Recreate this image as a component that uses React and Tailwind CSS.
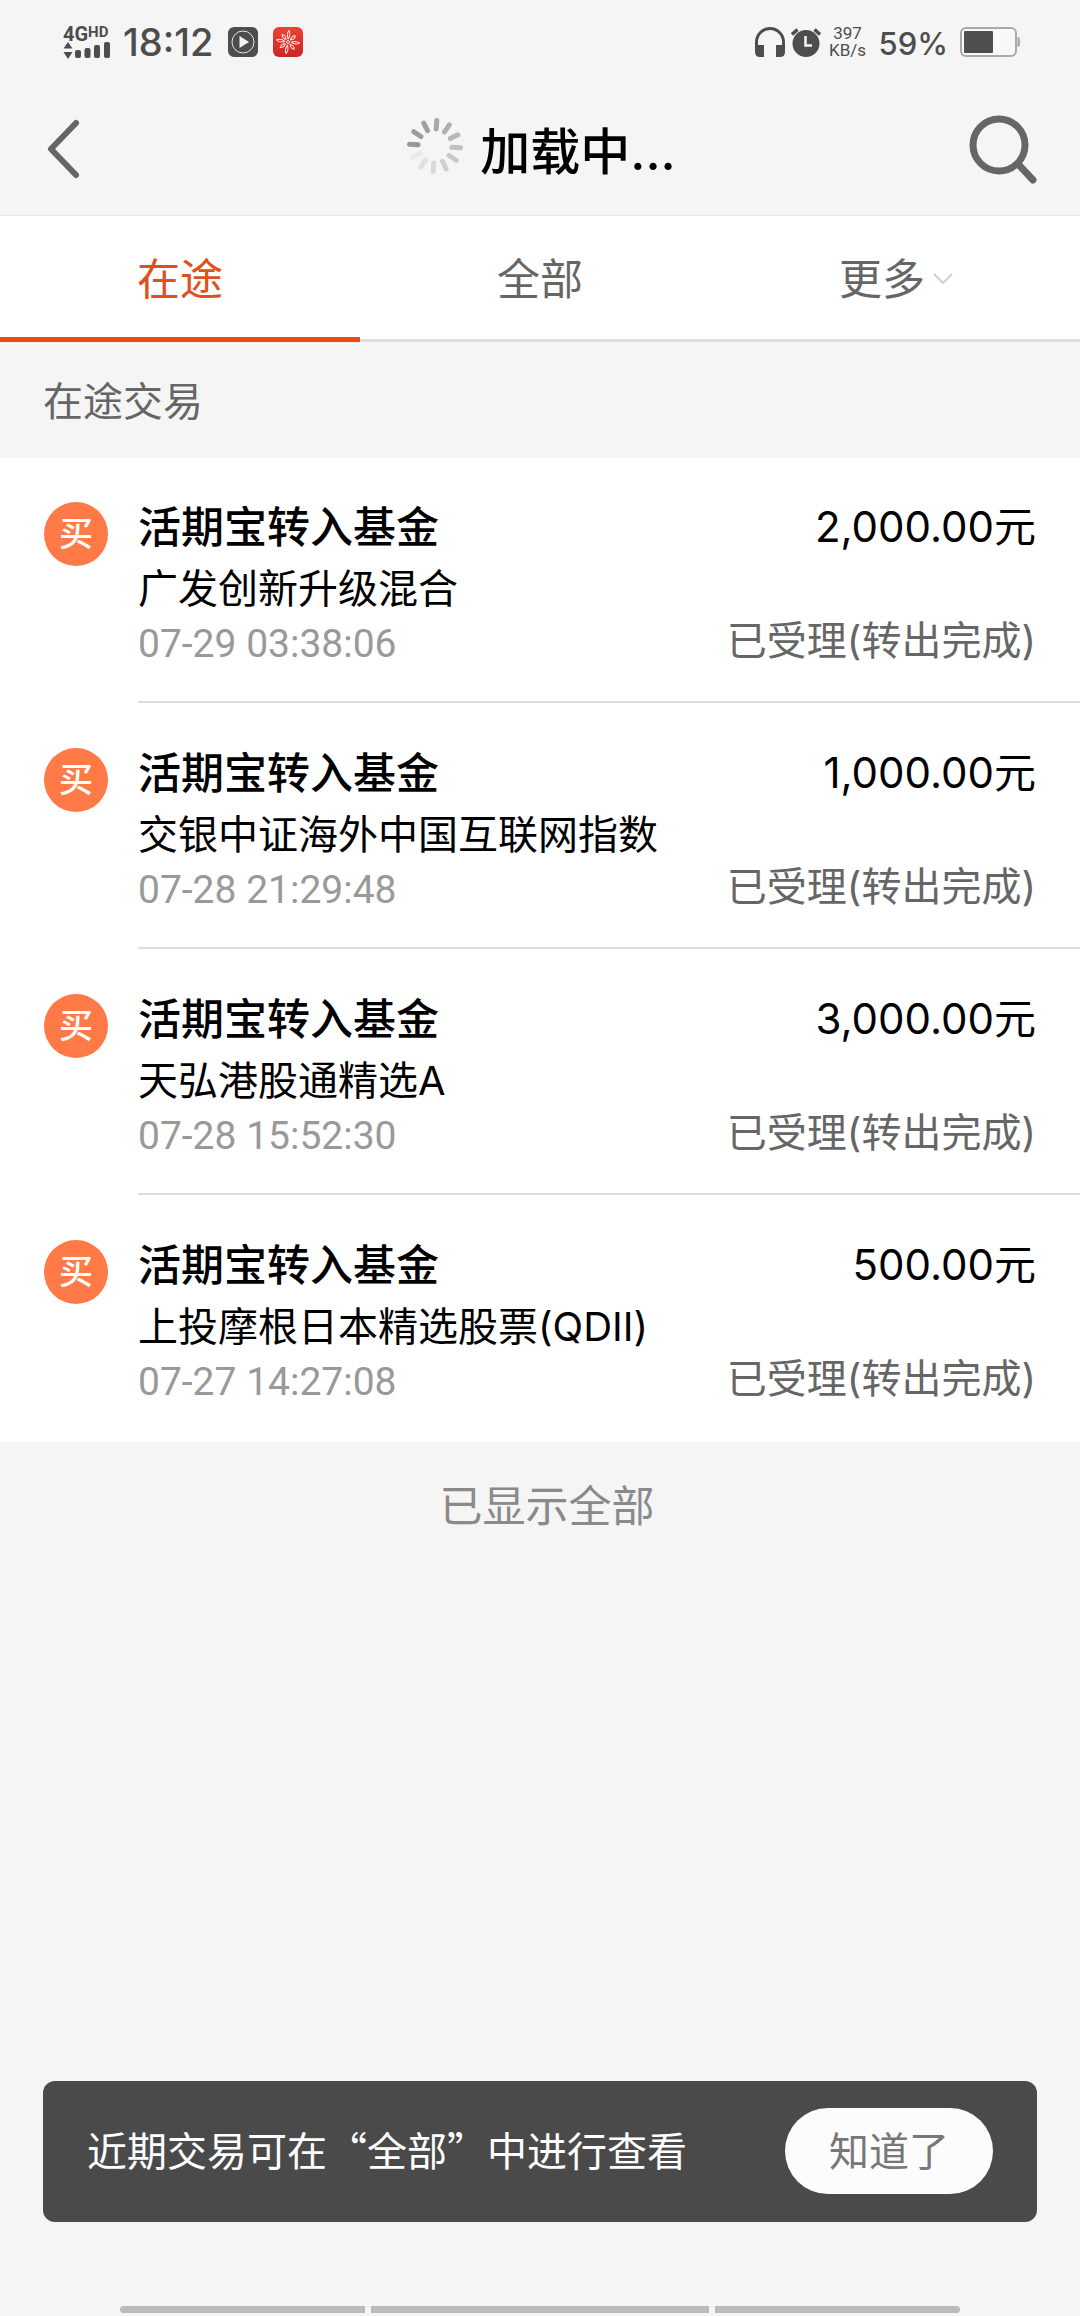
// TradeListPage - pending fund trades: status bar, header, tabs, trade rows and bottom notice.

import { useState } from 'react';
import clsx from 'clsx';

const TABS = [
  { id: 'pending', label: '在途' },
  { id: 'all', label: '全部' },
  { id: 'more', label: '更多', hasMenu: true },
];

const TRADES = [
  { id: 1, title: '活期宝转入基金', fund: '广发创新升级混合', time: '07-29 03:38:06', amount: '2,000.00', status: '已受理(转出完成)' },
  { id: 2, title: '活期宝转入基金', fund: '交银中证海外中国互联网指数', time: '07-28 21:29:48', amount: '1,000.00', status: '已受理(转出完成)' },
  { id: 3, title: '活期宝转入基金', fund: '天弘港股通精选A', time: '07-28 15:52:30', amount: '3,000.00', status: '已受理(转出完成)' },
  { id: 4, title: '活期宝转入基金', fund: '上投摩根日本精选股票(QDII)', time: '07-27 14:27:08', amount: '500.00', status: '已受理(转出完成)' },
];

const SPOKE_COLORS = [
  '#a8a8a8', '#b0b0b0', '#b8b8b8', '#c0c0c0', '#c8c8c8', '#d0d0d0',
  '#d8d8d8', '#e0e0e0', '#e9e9e9', '#989898', '#9c9c9c', '#a0a0a0',
];

const SignalIcon = () => (
  <svg width="48" height="17" viewBox="0 0 48 17" fill="#4d4d4d">
    <path d="M5 0 L9.5 6.5 H0.5 Z M5 17 L9.5 10 H0.5 Z" />
    <rect x="12" y="8" width="6" height="8" rx="2" />
    <rect x="21.5" y="6" width="6" height="10" rx="2" />
    <rect x="31" y="3" width="6" height="13" rx="2" />
    <rect x="41" y="0" width="6" height="16" rx="2" />
  </svg>
);

const PlayIcon = () => (
  <svg width="30" height="30" viewBox="0 0 30 30">
    <rect width="30" height="30" rx="6" fill="#4d4d4d" />
    <circle cx="15" cy="15" r="11" fill="none" stroke="#e4e4e4" strokeWidth="1" />
    <path d="M11.5 9 L21 15 L11.5 21 Z" fill="#f4f4f4" />
  </svg>
);

const FlowerIcon = () => (
  <svg width="30" height="30" viewBox="0 0 30 30">
    <defs>
      <linearGradient id="flower-bg" x1="0" y1="0" x2="0" y2="1">
        <stop offset="0" stopColor="#ee4038" />
        <stop offset="1" stopColor="#cb2622" />
      </linearGradient>
    </defs>
    <rect width="30" height="30" rx="6" fill="url(#flower-bg)" />
    <g fill="none" stroke="#ffe6e2" strokeWidth="1">
      {[5, 50, 95, 140, 190, 235, 280, 322].map((angle, i) => (
        <path
          key={angle}
          d={i % 2 ? 'M15 12 Q12.5 8 15 5.5 Q17.5 8 15 12' : 'M15 12 Q12.5 7 15 3.5 Q17.5 7 15 12'}
          transform={`rotate(${angle} 15 15)`}
        />
      ))}
      <circle cx="15" cy="15" r="1.5" />
    </g>
  </svg>
);

const HeadphonesIcon = () => (
  <svg width="30" height="30" viewBox="0 0 30 30">
    <path d="M1.5 22 V15 A13.5 13.5 0 0 1 28.5 15 V22" fill="none" stroke="#4d4d4d" strokeWidth="3" />
    <path d="M0 18 H9 V30 H5 Q0 30 0 25 Z M30 18 H21 V30 H25 Q30 30 30 25 Z" fill="#4d4d4d" />
  </svg>
);

const AlarmIcon = () => (
  <svg width="30" height="30" viewBox="0 0 30 30">
    <circle cx="15" cy="16.5" r="13.5" fill="#4d4d4d" />
    <path d="M1 7.5 L6.5 2.5 M29 7.5 L23.5 2.5" stroke="#4d4d4d" strokeWidth="3.5" />
    <path d="M14.5 9 V18.5 H21" fill="none" stroke="#f4f4f4" strokeWidth="2.5" />
  </svg>
);

const BatteryIcon = () => (
  <svg width="60" height="30" viewBox="0 0 60 30">
    <rect x="1" y="1" width="55" height="28" rx="5" fill="#f8f8f8" stroke="#a9a9a9" strokeWidth="2" />
    <rect x="4" y="4" width="29" height="22" rx="1" fill="#4f4f4f" />
    <path d="M57.5 10 Q60 10 60 12 V18 Q60 20 57.5 20 Z" fill="#a9a9a9" />
  </svg>
);

const Spinner = () => (
  <svg width="58" height="58" viewBox="0 0 58 58" strokeWidth="5" strokeLinecap="round">
    {SPOKE_COLORS.map((color, i) => (
      <path key={color} d="M29 3.5 V12" stroke={color} transform={`rotate(${i * 30 + 4} 29 29)`} />
    ))}
  </svg>
);

const StatusBar = () => (
  <div className="flex h-21 items-center justify-between pr-15 pl-[63px] text-[#4d4d4d]">
    <div className="flex items-center">
      <div className="w-[60px]">
        <div className="flex items-start font-['Roboto',sans-serif] font-bold">
          <span className="text-[20px] leading-4">4G</span>
          <span className="text-[15px] leading-3">HD</span>
        </div>
        <SignalIcon />
      </div>
      <span className="w-[105px] text-[38px] leading-10 font-medium">18:12</span>
      <div className="flex gap-[15px]">
        <PlayIcon />
        <FlowerIcon />
      </div>
    </div>
    <div className="flex items-center">
      <HeadphonesIcon />
      <span className="ml-1.5"><AlarmIcon /></span>
      <div className="ml-2 w-[38px] text-center font-['Roboto',sans-serif] text-[17px] leading-[17px]">
        <div>397</div>
        <div>KB/s</div>
      </div>
      <span className="mx-3 pt-1 text-[31px] leading-10 font-medium">59%</span>
      <BatteryIcon />
    </div>
  </div>
);

const Header = () => (
  <header className="grid h-33 grid-cols-[1fr_auto_1fr] items-center border-b border-[#e6e6e6] px-[42px]">
    <button aria-label="返回" className="justify-self-start pl-1">
      <svg width="36" height="62" viewBox="0 0 36 62" fill="none" stroke="#666" strokeWidth="6" strokeLinecap="round" strokeLinejoin="round">
        <path d="M30 4 L5 30 L30 56" />
      </svg>
    </button>
    <div className="flex items-center gap-4 pl-0.5">
      <span className="pb-2"><Spinner /></span>
      <h1 className="pt-1 text-[50px] leading-16 font-medium text-black">加载中...</h1>
    </div>
    <button aria-label="搜索" className="justify-self-end">
      <svg width="70" height="72" viewBox="0 0 70 72" fill="none" stroke="#666" strokeWidth="7" strokeLinecap="round">
        <circle cx="31" cy="31" r="26" />
        <path d="M50 50 L65 66" />
      </svg>
    </button>
  </header>
);

const Tabs = ({ active, onChange }) => (
  <nav className="grid h-[126px] grid-cols-3 bg-white shadow-[inset_0_-3px_0_#dfdfdf]">
    {TABS.map((tab) => (
      <button
        key={tab.id}
        onClick={() => onChange(tab.id)}
        className={clsx(
          'flex items-center justify-center gap-2 border-b-5 pt-1 text-[43px] leading-16',
          active === tab.id ? 'border-[#ee4d10] text-[#e0501c]' : 'border-transparent text-[#666]',
          tab.hasMenu && 'pr-2',
        )}
      >
        {tab.label}
        {tab.hasMenu && (
          <svg width="20" height="12" viewBox="0 0 20 12" fill="none" stroke="#d0d0d0" strokeWidth="2">
            <path d="M1 1 L10 10 L19 1" />
          </svg>
        )}
      </button>
    ))}
  </nav>
);

const TradeRow = ({ trade }) => (
  <li className="group flex pl-11">
    <span className="mt-11 flex size-16 shrink-0 items-center justify-center rounded-full bg-[#ff7a47] text-[34px] leading-10 font-medium text-white">
      买
    </span>
    <div className="ml-[30px] flex h-[245px] grow justify-between border-b-2 border-[#dedede] pt-[37px] pr-11 group-last:h-[246px] group-last:border-transparent">
      <div>
        <h2 className="text-[43px] leading-16 font-medium text-black">{trade.title}</h2>
        <p className="text-[40px] leading-15 text-black">{trade.fund}</p>
        <time className="block font-['Roboto',sans-serif] text-[39px] leading-[50px] text-[#999]">{trade.time}</time>
      </div>
      <div className="flex flex-col gap-13 text-right">
        <p className="text-[42px] leading-16 text-black">{trade.amount}元</p>
        <p className="text-[40px] leading-15 text-[#666]">{trade.status}</p>
      </div>
    </div>
  </li>
);

const Notice = ({ onClose }) => (
  <div className="mx-[43px] mt-auto flex h-[141px] items-center justify-between rounded-xl bg-[#4a4a4a] px-11 pb-0.5 font-['Noto_Sans_CJK_SC',sans-serif] text-[40px] leading-15">
    <p className="pb-1 text-white">近期交易可在“全部”中进行查看</p>
    <button onClick={onClose} className="h-[86px] rounded-full bg-[#fcfcfc] px-11 pb-1 text-[#777]">知道了</button>
  </div>
);

const App = () => {
  const [activeTab, setActiveTab] = useState('pending');
  const [showNotice, setShowNotice] = useState(true);

  return (
    <div className="flex min-h-screen flex-col bg-[#f5f5f5] font-['Inter','Noto_Sans_CJK_SC',sans-serif]">
      <StatusBar />
      <Header />
      <Tabs active={activeTab} onChange={setActiveTab} />

      <main>
        <h2 className="flex h-29 items-center pt-1 pl-[43px] text-[40px] leading-15 text-[#666]">在途交易</h2>
        <ul className="flex flex-col gap-px bg-white">
          {TRADES.map((trade) => (
            <TradeRow key={trade.id} trade={trade} />
          ))}
        </ul>
        <p className="pt-8 pl-3.5 text-center text-[43px] leading-16 text-[#8a8a8a]">已显示全部</p>
      </main>

      {showNotice && <Notice onClose={() => setShowNotice(false)} />}

      {/* system gesture bars */}
      <div className="mt-21 mb-[3px] grid grid-cols-[245fr_338fr_245fr] gap-1.5 px-30">
        <span className="h-[7px] rounded-l-full bg-[#bbb]" />
        <span className="h-[7px] bg-[#bbb]" />
        <span className="h-[7px] rounded-r-full bg-[#bbb]" />
      </div>
    </div>
  );
};

export default App;
